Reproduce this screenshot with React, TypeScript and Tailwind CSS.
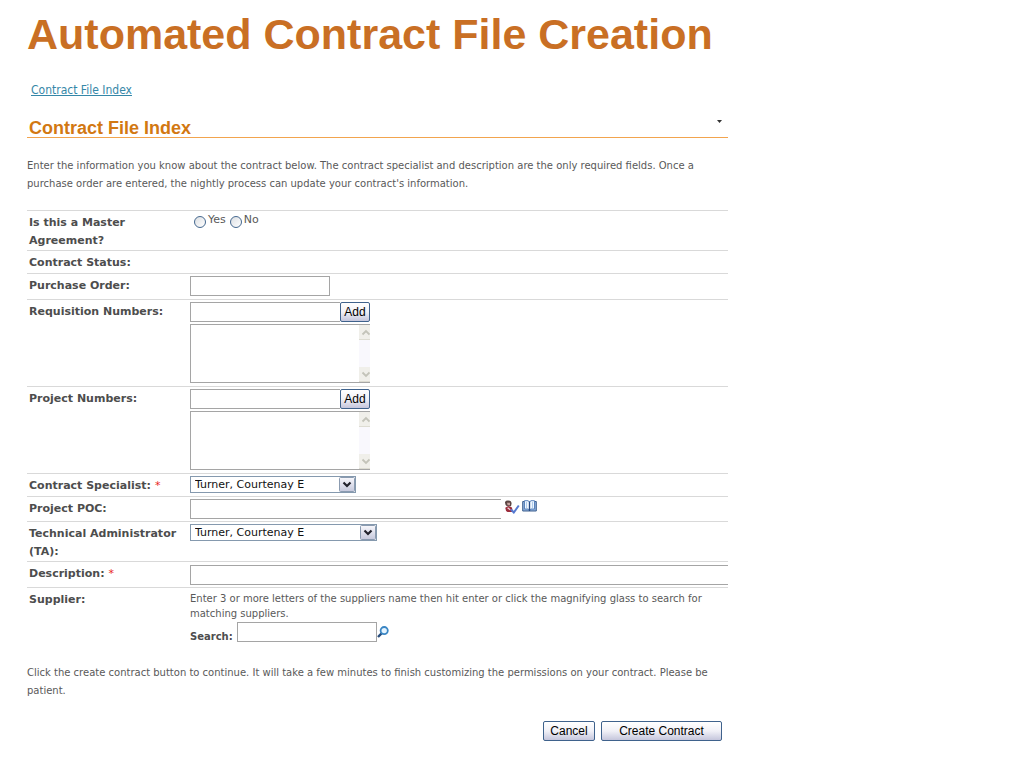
import type { ReactNode } from "react";

const inputBase = "h-5 border border-[#a5a5a5] bg-white px-1 text-[11px] outline-none";
const buttonBase =
  "h-5 rounded-[2px] border border-[#3f628c] bg-linear-to-b from-white via-[#f1f1f7] to-[#c5c6dc] font-['Liberation_Sans',Arial,sans-serif] text-xs leading-4 text-black";

type RowProps = {
  label: string;
  htmlFor?: string;
  required?: boolean;
  minHeight?: string;
  children?: ReactNode;
};

function Row({ label, htmlFor, required, minHeight = "min-h-[23px]", children }: RowProps) {
  return (
    <div className={`flex border-t border-[#d9d9d9] pt-0.5 ${minHeight}`}>
      <div className="w-[163px] shrink-0 pt-px pl-0.5 text-[11px] leading-[18px] font-bold text-[#4d4d4d]">
        <label htmlFor={htmlFor}>{label}</label>
        {required && <span className="ml-1 font-normal text-[#e8241c]">*</span>}
      </div>
      <div className="min-w-0 flex-1">{children}</div>
    </div>
  );
}

function ScrollEnd({ up }: { up?: boolean }) {
  return (
    <svg viewBox="0 0 11 15" className="h-[15px] w-[11px]" aria-hidden="true">
      <rect width="11" height="15" fill="#f0efea" />
      <path d="M0 14.5H11" stroke="#dddcd2" />
      <path d={up ? "M3.5 9.5 7 6l3.5 3.5" : "M3.5 5.5 7 9l3.5-3.5"} fill="none" stroke="#c3c3b9" strokeWidth="1.8" />
    </svg>
  );
}

function NumberList({ id, name }: { id: string; name: string }) {
  return (
    <div className="flex w-[180px] flex-col gap-0.5">
      <div className="flex">
        <input id={id} type="text" className={`${inputBase} w-[150px] border-r-0`} />
        <button type="button" className={`${buttonBase} w-[30px]`}>
          Add
        </button>
      </div>
      <div className="flex h-[59px] border-y border-l border-[#a5a5a5]">
        <textarea aria-label={name} className="min-w-0 flex-1 resize-none overflow-hidden px-1 text-[11px] outline-none" />
        <div className="flex w-[11px] flex-col justify-between bg-[#f9f8fd]">
          <ScrollEnd up />
          <ScrollEnd />
        </div>
      </div>
    </div>
  );
}

function PersonSelect({ id, width }: { id: string; width: string }) {
  return (
    <div className={`relative h-[17px] ${width}`}>
      <select
        id={id}
        className="block h-full w-full appearance-none border border-[#8599ae] bg-white pl-1 text-[11px] leading-[15px] text-[#111] outline-none"
      >
        <option>Turner, Courtenay E</option>
      </select>
      <svg viewBox="0 0 16 15" className="pointer-events-none absolute top-px right-px h-[15px] w-4" aria-hidden="true">
        <defs>
          <linearGradient id={`${id}-face`} x1="0" y1="0" x2="0" y2="1">
            <stop offset="0" stopColor="#f8f8fc" />
            <stop offset="1" stopColor="#c6c8dc" />
          </linearGradient>
        </defs>
        <rect x=".5" y=".5" width="15" height="14" rx="1" fill={`url(#${id}-face)`} stroke="#8b9bb0" />
        <path d="m4.5 5.5 3.5 3.5 3.5-3.5" fill="none" stroke="#22222c" strokeWidth="2.2" />
      </svg>
    </div>
  );
}

function CheckNamesIcon() {
  return (
    <svg viewBox="0 0 16 14" className="h-3.5 w-4" aria-hidden="true">
      <path d="M1 2Q2 .3 4.5.6 7.5.8 7.6 3.5L7 6.3 3 6.3Q.8 4.5 1 2Z" fill="#5c4644" />
      <path d="M3 2.8H6V5.3H3.6Z" fill="#c9a5a0" />
      <path d="M1.5 7.5 4.5 6 8 7.5 8.8 12H3.5Q1 10.5 1.5 7.5Z" fill="#9c2c3c" />
      <path d="M3.6 7.7 6.2 9.8" stroke="#ecd5d8" strokeWidth="1.3" />
      <path d="m7 9.5 2.8 3 5-7" fill="none" stroke="#5579d0" strokeWidth="2" />
    </svg>
  );
}

function BookIcon() {
  return (
    <svg viewBox="0 0 15 12" className="h-3 w-[15px]" aria-hidden="true">
      <path d="M.7 1.5H14.3V11H.7Z" fill="#8fb0dc" stroke="#3e618f" />
      <path d="M2.5.7H6L7.5 2 9 .7h3.5V9H9l-1.5 1L6 9H2.5Z" fill="#eef6ff" stroke="#5a84bd" />
      <path d="M7.5 2V11" stroke="#284b83" strokeWidth="1.3" />
      <path d="M4.5 2V8M10.5 2V8" stroke="#b0cdec" />
    </svg>
  );
}

function SearchIcon() {
  return (
    <svg viewBox="0 0 12 12" className="size-3" aria-hidden="true">
      <path d="M4.8 7.2 1 11" stroke="#284d7c" strokeWidth="2.4" />
      <circle cx="7.2" cy="4.6" r="3.6" fill="#e5f4ff" stroke="#3a86c4" strokeWidth="1.8" />
    </svg>
  );
}

function Radio({ id, label }: { id: string; label: string }) {
  return (
    <div className="flex items-start gap-0.5">
      <input
        id={id}
        type="radio"
        name="master"
        className="mt-[3px] size-3 appearance-none rounded-full border border-[#45688f] bg-linear-to-br from-[#dcdfe3] to-white checked:bg-[#45688f]"
      />
      <label htmlFor={id} className="text-[11px] leading-[14px]">
        {label}
      </label>
    </div>
  );
}

export default function App() {
  return (
    <main className="max-w-[728px] bg-white pt-2.5 pb-6 pl-[27px] font-['DejaVu_Sans',Verdana,sans-serif] text-[10px] leading-[18px] text-[#595959]">
      <h1 className="font-['Liberation_Sans',Arial,sans-serif] text-[43px] leading-[48px] font-bold whitespace-nowrap text-[#c96f24]">
        Automated Contract File Creation
      </h1>
      <nav className="mt-[23px] pl-1 font-['DejaVu_Sans_Condensed','DejaVu_Sans',Tahoma,sans-serif] text-xs leading-[18px]">
        <a href="#index" className="text-[#3587a8] underline">
          Contract File Index
        </a>
      </nav>
      <header className="mt-[18px] flex h-5 items-start justify-between pr-1.5 pl-0.5">
        <h2 className="font-['Liberation_Sans',Arial,sans-serif] text-lg leading-[22px] font-bold text-[#d27812]">
          Contract File Index
        </h2>
        <button type="button" aria-label="Section menu" className="mt-[3px]">
          <svg viewBox="0 0 5 3" className="h-[3px] w-[5px]" aria-hidden="true">
            <path d="M0 0H5L2.5 3Z" fill="#333" />
          </svg>
        </button>
      </header>
      <hr className="h-px border-0 bg-[#f2a44e]" />
      <p className="mt-[19px]">
        Enter the information you know about the contract below. The contract specialist and description are the only
        required fields. Once a purchase order are entered, the nightly process can update your contract's information.
      </p>
      <form className="mt-[17px]" onSubmit={(e) => e.preventDefault()}>
        <Row label="Is this a Master Agreement?" minHeight="min-h-10">
          <div className="flex gap-1 pl-1" role="radiogroup" aria-label="Is this a Master Agreement?">
            <Radio id="master-yes" label="Yes" />
            <Radio id="master-no" label="No" />
          </div>
        </Row>
        <Row label="Contract Status:" />
        <Row label="Purchase Order:" htmlFor="purchase" minHeight="min-h-[26px]">
          <input id="purchase" type="text" className={`${inputBase} block w-[140px]`} />
        </Row>
        <Row label="Requisition Numbers:" htmlFor="requisition" minHeight="min-h-[87px]">
          <NumberList id="requisition" name="Added requisition numbers" />
        </Row>
        <Row label="Project Numbers:" htmlFor="project" minHeight="min-h-[87px]">
          <NumberList id="project" name="Added project numbers" />
        </Row>
        <Row label="Contract Specialist:" htmlFor="specialist" required>
          <PersonSelect id="specialist" width="w-[166px]" />
        </Row>
        <Row label="Project POC:" htmlFor="poc" minHeight="min-h-[25px]">
          <div className="flex items-start">
            <input id="poc" type="text" className={`${inputBase} w-[311px] border-r-0`} />
            <button type="button" aria-label="Check names" className="mt-px ml-[3px]">
              <CheckNamesIcon />
            </button>
            <button type="button" aria-label="Browse" className="mt-px ml-0.5">
              <BookIcon />
            </button>
          </div>
        </Row>
        <Row label="Technical Administrator (TA):" htmlFor="administrator" minHeight="min-h-10">
          <PersonSelect id="administrator" width="w-[187px]" />
        </Row>
        <Row label="Description:" htmlFor="description" required minHeight="min-h-[26px]">
          <input id="description" type="text" className={`${inputBase} mt-px block w-full border-r-0`} />
        </Row>
        <Row label="Supplier:" htmlFor="supplier">
          <p className="pt-px leading-[15px]">
            Enter 3 or more letters of the suppliers name then hit enter or click the magnifying glass to search for
            matching suppliers.
          </p>
          <div className="mt-px flex items-start">
            <label htmlFor="supplier" className="mr-1 pt-1.5 font-bold text-[#4d4d4d]">
              Search:
            </label>
            <input id="supplier" type="text" className={`${inputBase} w-[140px]`} />
            <button type="button" aria-label="Search suppliers" className="mt-1">
              <SearchIcon />
            </button>
          </div>
        </Row>
        <p className="mt-[18px]">
          Click the create contract button to continue. It will take a few minutes to finish customizing the
          permissions on your contract. Please be patient.
        </p>
        <div className="mt-[21px] flex justify-end gap-1.5 pr-1.5">
          <button type="button" className={`${buttonBase} w-[52px]`}>
            Cancel
          </button>
          <button type="submit" className={`${buttonBase} w-[121px]`}>
            Create Contract
          </button>
        </div>
      </form>
    </main>
  );
}
